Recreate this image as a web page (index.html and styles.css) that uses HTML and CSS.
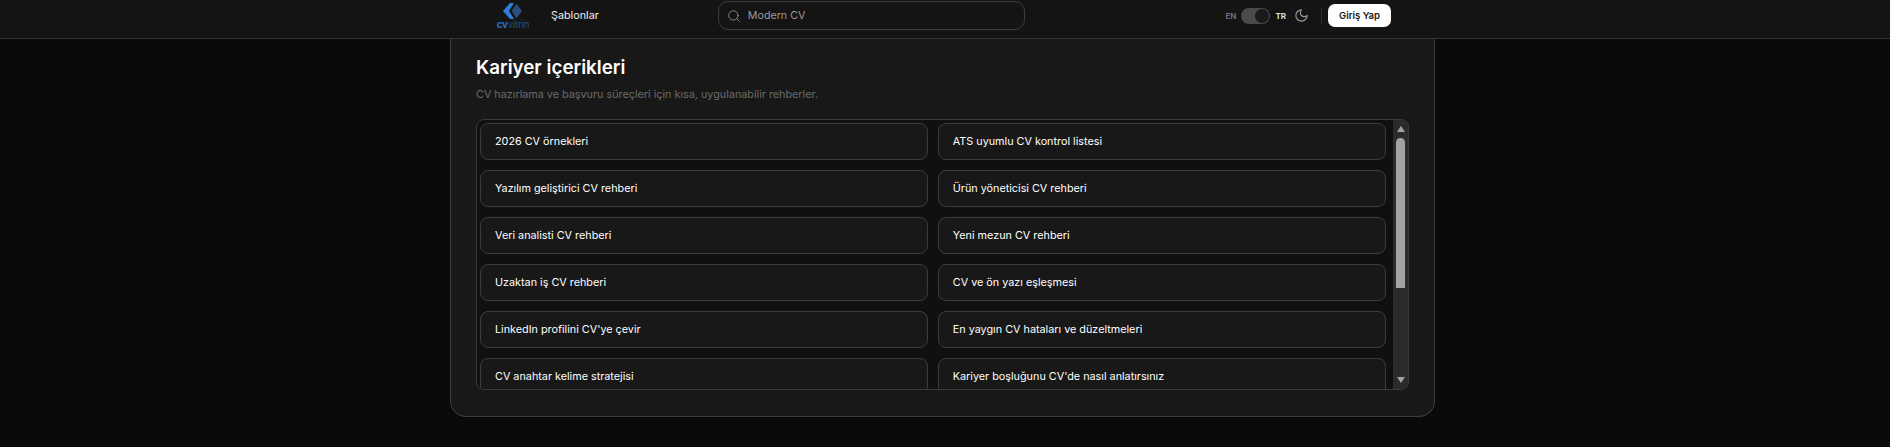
FILE: index.html
```html
<!DOCTYPE html>
<html lang="tr">
<head>
    <meta charset="UTF-8">
    <meta name="viewport" content="width=device-width, initial-scale=1.0">
    <title>CV Vitrin</title>
    <link rel="stylesheet" href="styles.css">
</head>
<body>

    <header class="header">
        <div class="header-inner">
            <a class="logo" href="#">
                <svg class="logo-mark" width="22" height="16" viewBox="0 0 22 19" preserveAspectRatio="none">
                    <path fill="#2f7fd6" d="M8 0h4L7 9.500 12 19H8L1 9.500z"/>
                    <path fill="#2d4f7c" d="M14.500 1 20 9.500 14.500 18 9.500 9.500z"/>
                </svg>
                <span class="logo-text"><b>cv</b>vitrin</span>
            </a>
            <a class="nav-link" href="#">Şablonlar</a>

            <div class="search">
                <svg width="14" height="14" viewBox="0 0 24 24" fill="none" stroke="#8a8a8a" stroke-width="1.6" stroke-linecap="round">
                    <circle cx="11" cy="11" r="8"/>
                    <path d="m21 21-4.300-4.300"/>
                </svg>
                <span>Modern CV</span>
            </div>

            <div class="header-right">
                <span class="lang">EN</span>
                <span class="toggle"><span class="toggle-knob"></span></span>
                <span class="lang lang-active">TR</span>
                <svg class="moon" width="15" height="15" viewBox="0 0 24 24" fill="none" stroke="#9a9a9a" stroke-width="1.8" stroke-linecap="round" stroke-linejoin="round">
                    <path d="M12 3a6 6 0 0 0 9 9 9 9 0 1 1-9-9z"/>
                </svg>
                <span class="divider"></span>
                <button class="login">Giriş Yap</button>
            </div>
        </div>
    </header>

    <main class="card">
        <h1>Kariyer içerikleri</h1>
        <p class="subtitle">CV hazırlama ve başvuru süreçleri için kısa, uygulanabilir rehberler.</p>

        <div class="list-box">
            <div class="list">
                <a class="item" href="#">2026 CV örnekleri</a>
                <a class="item" href="#">ATS uyumlu CV kontrol listesi</a>
                <a class="item" href="#">Yazılım geliştirici CV rehberi</a>
                <a class="item" href="#">Ürün yöneticisi CV rehberi</a>
                <a class="item" href="#">Veri analisti CV rehberi</a>
                <a class="item" href="#">Yeni mezun CV rehberi</a>
                <a class="item" href="#">Uzaktan iş CV rehberi</a>
                <a class="item" href="#">CV ve ön yazı eşleşmesi</a>
                <a class="item" href="#">LinkedIn profilini CV'ye çevir</a>
                <a class="item" href="#">En yaygın CV hataları ve düzeltmeleri</a>
                <a class="item" href="#">CV anahtar kelime stratejisi</a>
                <a class="item" href="#">Kariyer boşluğunu CV'de nasıl anlatırsınız</a>
            </div>
            <div class="scrollbar">
                <span class="arrow arrow-up"></span>
                <span class="thumb"></span>
                <span class="arrow arrow-down"></span>
            </div>
        </div>
    </main>

</body>
</html>
```

FILE: styles.css
```css
body {
    font-family: Inter, "Liberation Sans", sans-serif;
    background-color: #0a0a0a;
    color: #fff;
    margin: 0;
    height: 447px;
    overflow: hidden;
}

a {
    color: inherit;
    text-decoration: none;
}

.header {
    height: 38px;
    background-color: #141414;
    border-bottom: 1px solid #333;
}

.header-inner {
    display: flex;
    align-items: center;
    height: 100%;
    padding: 0 0 7px 496px;
    box-sizing: border-box;
    width: 1391px;
}

.logo {
    display: flex;
    flex-direction: column;
    align-items: center;
    gap: 1px;
    width: 34px;
    margin-top: 1px;
}

.logo-text {
    font-size: 9.500px;
    line-height: 10px;
    color: #24486f;
    letter-spacing: -0.2px;
    font-weight: 500;
}

.logo-text b {
    color: #2f74c0;
    font-weight: 700;
}

.nav-link {
    margin-left: 21px;
    font-size: 10.800px;
    font-weight: 400;
    color: #f0f0f0;
}

.search {
    display: flex;
    align-items: center;
    gap: 7px;
    width: 307px;
    height: 29px;
    margin-left: 119px;
    padding-left: 8px;
    box-sizing: border-box;
    border: 1px solid #3d3d3d;
    border-radius: 10px;
    font-size: 10.700px;
    color: #9a9a9a;
}

.header-right {
    display: flex;
    align-items: center;
    margin-left: auto;
}

.lang {
    font-size: 8px;
    font-weight: 600;
    color: #777;
}

.lang-active {
    color: #ddd;
    font-weight: 700;
}

.toggle {
    display: flex;
    justify-content: flex-end;
    align-items: center;
    width: 29px;
    height: 16px;
    margin: 0 5px;
    padding: 1px;
    box-sizing: border-box;
    border-radius: 8px;
    background-color: #4a4a4a;
}

.toggle-knob {
    width: 14px;
    height: 14px;
    border-radius: 50%;
    background-color: #1a1a1a;
}

.moon {
    margin-left: 8px;
}

.divider {
    width: 1px;
    height: 16px;
    margin: 0 6px 0 12px;
    background-color: #2e2e2e;
}

.login {
    width: 63px;
    height: 23px;
    padding: 0;
    border: none;
    border-radius: 7px;
    background-color: #fff;
    color: #161616;
    font-family: inherit;
    font-size: 9.500px;
    font-weight: 600;
}

.card {
    width: 985px;
    height: 378px;
    margin-left: 450px;
    padding: 16px 25px 0;
    box-sizing: border-box;
    background-color: #181818;
    border: 1px solid #3c3c3c;
    border-top: none;
    border-radius: 0 0 16px 16px;
}

h1 {
    margin: 0;
    font-size: 18.800px;
    line-height: 26px;
    font-weight: 600;
}

.subtitle {
    margin: 6px 0 0;
    font-size: 10.800px;
    line-height: 16px;
    color: #6a6a6a;
}

.list-box {
    display: flex;
    height: 271px;
    margin-top: 16px;
    box-sizing: border-box;
    overflow: hidden;
    background-color: #101010;
    border: 1px solid #3a3a3a;
    border-radius: 8px;
}

.list {
    flex: 1;
    display: grid;
    grid-template-columns: 1fr 1fr;
    grid-auto-rows: 37.400px;
    gap: 9.600px;
    padding: 3px 7px 0 3px;
    overflow: hidden;
}

.item {
    display: flex;
    align-items: center;
    padding-left: 14px;
    box-sizing: border-box;
    background-color: #181818;
    border: 1px solid #3c3c3c;
    border-radius: 8px;
    font-size: 10.800px;
    font-weight: 400;
    color: #fff;
}

.scrollbar {
    display: flex;
    flex-direction: column;
    align-items: center;
    width: 15px;
    flex-shrink: 0;
    background-color: #2b2b2b;
}

.arrow {
    width: 0;
    height: 0;
    border-left: 4.500px solid transparent;
    border-right: 4.500px solid transparent;
}

.arrow-up {
    margin-top: 6px;
    border-bottom: 6px solid #a3a3a3;
}

.arrow-down {
    margin-top: auto;
    margin-bottom: 6px;
    border-top: 6px solid #a3a3a3;
}

.thumb {
    width: 9px;
    height: 150px;
    margin-top: 6px;
    border-radius: 5px 5px 0 0;
    background-color: #a3a3a3;
}
```
